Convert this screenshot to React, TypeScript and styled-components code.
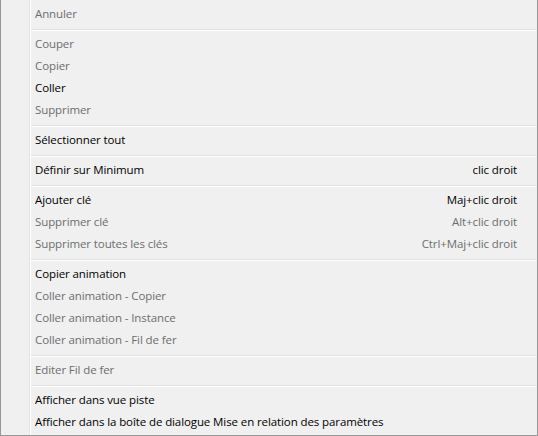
import React from 'react'
import styled, { createGlobalStyle } from 'styled-components'

const Global = createGlobalStyle`
	html, body {
		margin: 0;
		padding: 0;
		background: #f0f0f0;
	}
	body {
		font-family: "Open Sans", "Noto Sans", sans-serif;
	}
`

type Item = { label: string; shortcut?: string; disabled?: boolean }
type Group = Item[]

const groups: Group[] = [
	[{ label: 'Annuler', disabled: true }],
	[
		{ label: 'Couper', disabled: true },
		{ label: 'Copier', disabled: true },
		{ label: 'Coller' },
		{ label: 'Supprimer', disabled: true }
	],
	[{ label: 'Sélectionner tout' }],
	[{ label: 'Définir sur Minimum', shortcut: 'clic droit' }],
	[
		{ label: 'Ajouter clé', shortcut: 'Maj+clic droit' },
		{ label: 'Supprimer clé', shortcut: 'Alt+clic droit', disabled: true },
		{ label: 'Supprimer toutes les clés', shortcut: 'Ctrl+Maj+clic droit', disabled: true }
	],
	[
		{ label: 'Copier animation' },
		{ label: 'Coller animation - Copier', disabled: true },
		{ label: 'Coller animation - Instance', disabled: true },
		{ label: 'Coller animation - Fil de fer', disabled: true }
	],
	[{ label: 'Editer Fil de fer', disabled: true }],
	[
		{ label: 'Afficher dans vue piste' },
		{ label: 'Afficher dans la boîte de dialogue Mise en relation des paramètres' }
	]
]

export default function App() {
	return (
		<>
			<Global />
			<Menu>
				<Gutter />
				<Items>
					{groups.map((group, gi) => (
						<React.Fragment key={gi}>
							{gi > 0 && <Separator />}
							{group.map(item => (
								<Row key={item.label} disabled={item.disabled}>
									<span>{item.label}</span>
									{item.shortcut && <span>{item.shortcut}</span>}
								</Row>
							))}
						</React.Fragment>
					))}
				</Items>
			</Menu>
		</>
	)
}

const Menu = styled.div`
	width: 538px;
	height: 436px;
	box-sizing: border-box;
	display: flex;
	background: #f0f0f0;
	border-left: 1px solid #979797;
	border-right: 1px solid #979797;
	border-bottom: 1px solid #979797;
`

const Gutter = styled.div`
	width: 28px;
	flex: none;
	border-right: 1px solid #e2e3e3;
	box-shadow: 1px 0 0 #ffffff;
`

const Items = styled.div`
	flex: 1;
	padding: 3px 0 2px 1px;
	display: flex;
	flex-direction: column;
`

const Row = styled.div<{ disabled?: boolean }>`
	height: 22px;
	box-sizing: border-box;
	display: flex;
	align-items: center;
	justify-content: space-between;
	padding: 0 20px 2px 4px;
	font-size: 11.5px;
	letter-spacing: -0.1px;
	white-space: nowrap;
	color: ${p => (p.disabled ? '#6d6d6d' : '#000000')};
`

const Separator = styled.div`
	height: 8px;
	box-sizing: border-box;
	padding-top: 4px;
	margin-right: 1px;
	&::before {
		content: '';
		display: block;
		height: 1px;
		background: #e0e0e0;
		border-bottom: 1px solid #ffffff;
	}
`
